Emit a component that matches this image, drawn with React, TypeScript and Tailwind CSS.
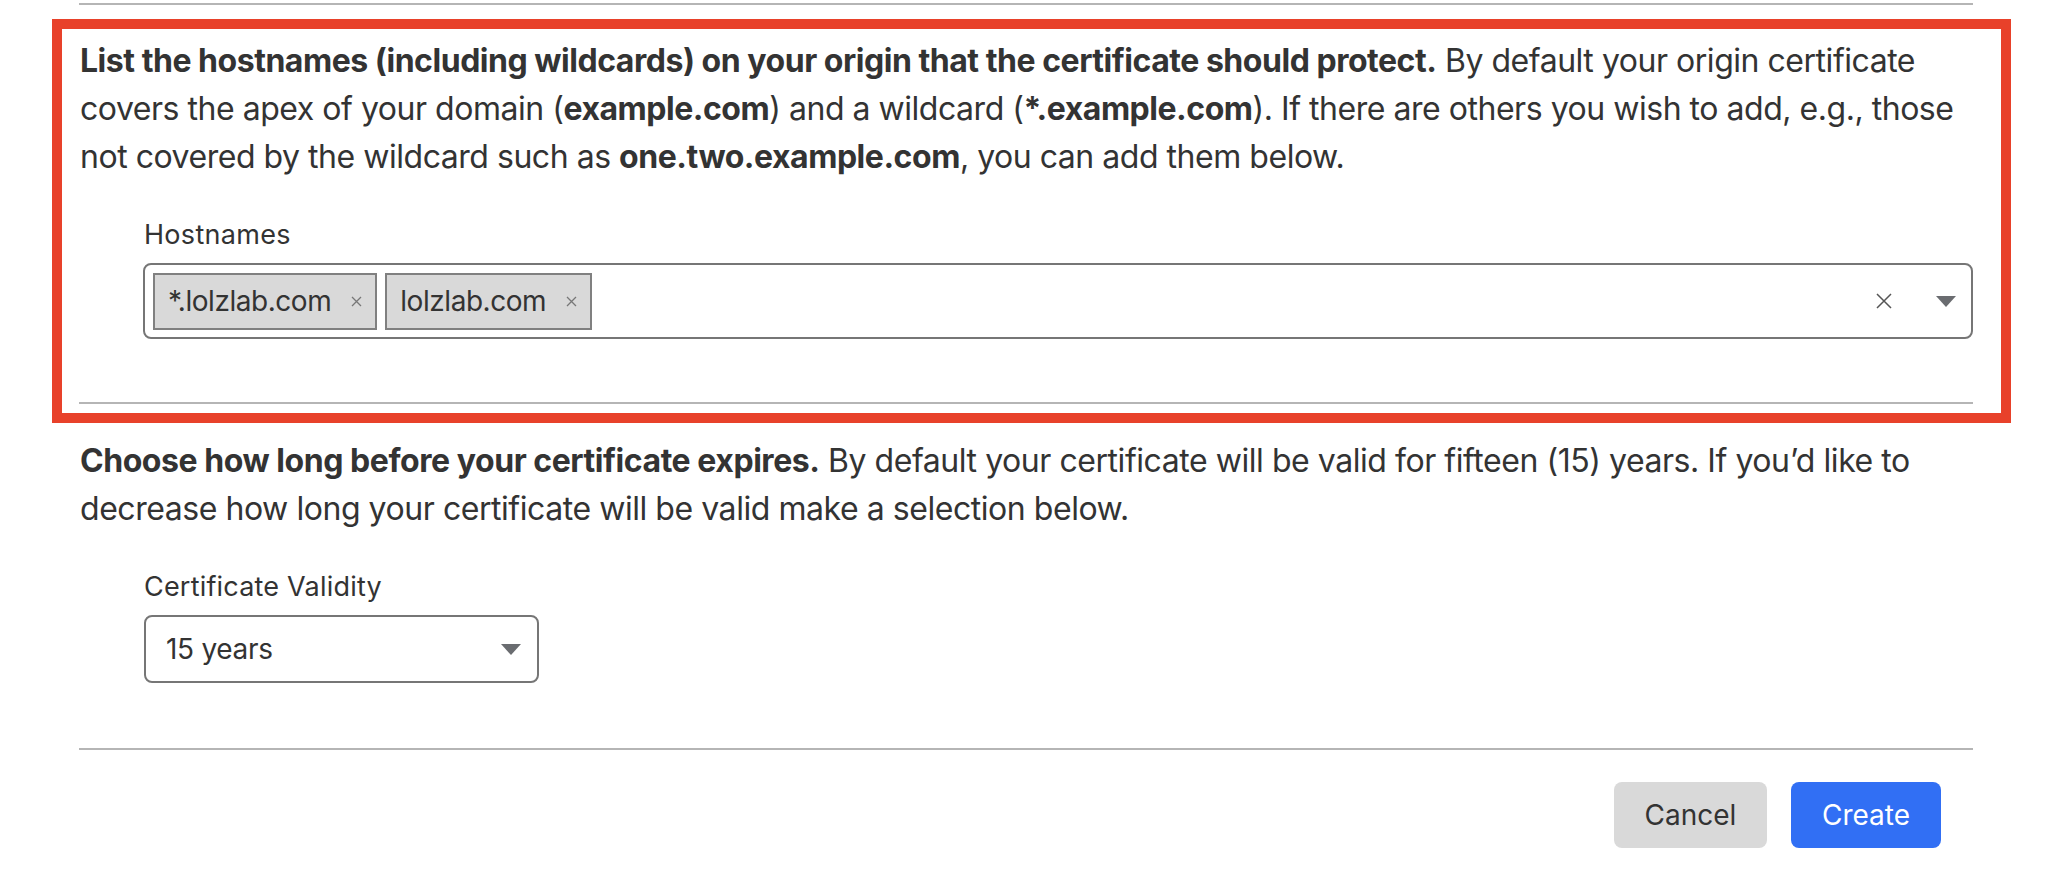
import React from "react";

function Caret({ className }: { className?: string }) {
  return (
    <svg width="20" height="11" viewBox="0 0 20 11" className={className}>
      <path d="M0 0 L20 0 L10 11 Z" fill="#6a6c70" />
    </svg>
  );
}

function Tag({ label }: { label: string }) {
  return (
    <div className="flex h-[57px] items-center border-2 border-[#808080] bg-[#d9d9d9] pl-[13px] pr-[13px]">
      <span className="text-[28px] leading-[36px] tracking-[-0.45px] text-[#333]">{label}</span>
      <svg width="11" height="11" viewBox="0 0 11 11" className="ml-[20px]">
        <path d="M1 1 L10 10 M10 1 L1 10" stroke="#777" strokeWidth="1.3" />
      </svg>
    </div>
  );
}

export default function App() {
  return (
    <div className="min-h-[884px] w-[2060px] bg-white font-['Inter','Liberation_Sans',sans-serif] text-[#333]">
      <div className="pl-[79px] pt-[3px]">
        <div className="h-[2px] w-[1894px] bg-[#b5b5b5]" />
      </div>

      <div className="ml-[52px] mt-[14px] w-[1959px] border-[10px] border-[#e8412a] pl-[17px] pr-[28px] pt-[8px] pb-[9px]">
        <p className="pl-[1px] text-[32px] leading-[48px] tracking-[-0.47px]">
          <b className="font-bold">
            List the hostnames (including wildcards) on your origin that the certificate should protect.
          </b>{" "}
          By default your origin certificate covers the apex of your domain (
          <b className="font-bold">example.com</b>) and a wildcard (
          <b className="font-bold">*.example.com</b>). If there are others you wish to add, e.g., those
          not covered by the wildcard such as <b className="font-bold">one.two.example.com</b>, you can
          add them below.
        </p>

        <div className="ml-[64px] mt-[36px]">
          <div className="pl-[1px] text-[27px] leading-[36px] tracking-[0.3px]">Hostnames</div>
          <div className="mt-[10px] flex h-[76px] items-center gap-[8px] rounded-[8px] border-2 border-[#767676] pl-[8px] pr-[15px]">
            <Tag label="*.lolzlab.com" />
            <Tag label="lolzlab.com" />
            <div className="flex-1" />
            <svg width="16" height="16" viewBox="0 0 16 16" className="mr-[36px]">
              <path d="M1 1 L15 15 M15 1 L1 15" stroke="#555" strokeWidth="1.5" />
            </svg>
            <Caret />
          </div>
        </div>

        <div className="mt-[63px] h-[2px] w-[1894px] bg-[#b5b5b5]" />
      </div>

      <div className="pl-[80px] pt-[14px]">
        <p className="w-[1893px] text-[32px] leading-[48px] tracking-[-0.45px]">
          <b className="font-bold">Choose how long before your certificate expires.</b> By default your
          certificate will be valid for fifteen (15) years. If you’d like to decrease how long your
          certificate will be valid make a selection below.
        </p>

        <div className="ml-[64px] mt-[36px]">
          <div className="text-[27px] leading-[36px] tracking-[0.2px]">Certificate Validity</div>
          <div className="mt-[10px] flex h-[68px] w-[395px] items-center justify-between rounded-[8px] border-2 border-[#767676] pl-[20px] pr-[16px]">
            <span className="text-[28px] leading-[36px] tracking-[-0.3px]">15 years</span>
            <Caret />
          </div>
        </div>
      </div>

      <div className="pl-[79px] pt-[65px]">
        <div className="h-[2px] w-[1894px] bg-[#b5b5b5]" />
        <div className="flex w-[1894px] justify-end gap-[24px] pr-[32px] pt-[32px]">
          <button className="h-[66px] w-[153px] rounded-[8px] bg-[#d9d9d9] text-[28px] text-[#333]">
            Cancel
          </button>
          <button className="h-[66px] w-[150px] rounded-[8px] bg-[#316ff4] text-[28px] text-white">
            Create
          </button>
        </div>
      </div>
    </div>
  );
}
